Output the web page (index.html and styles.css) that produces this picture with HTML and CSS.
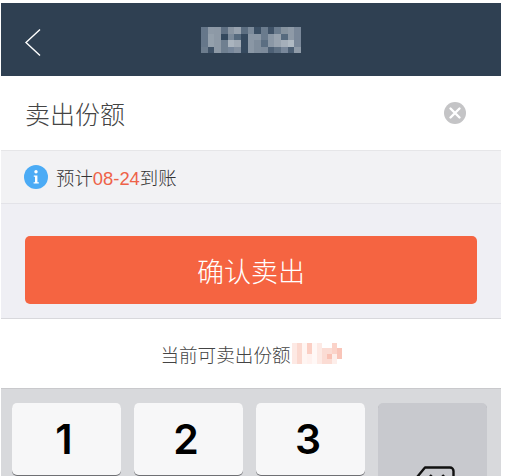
FILE: index.html
```html
<!DOCTYPE html>
<html lang="zh">
<head>
<meta charset="utf-8">
<title>确认卖出</title>
<link rel="stylesheet" href="styles.css">
</head>
<body>
<div class="app">
  <header class="nav">
    <svg class="back" width="18" height="30" viewBox="0 0 18 30"><path d="M16 1.5 2 14.5 16 27.5" fill="none" stroke="#fff" stroke-width="1.4"/></svg>
    <svg class="title-mosaic" width="100" height="26" viewBox="0 0 15 4" shape-rendering="crispEdges" preserveAspectRatio="none">
      <rect x="0" y="0" width="1" height="3" fill="#66778a"/><rect x="1" y="0" width="1" height="1" fill="#8e9aa7"/><rect x="2" y="0" width="1" height="4" fill="#8d99a6"/>
      <rect x="1" y="1" width="1" height="2" fill="#94a0ac"/><rect x="1" y="3" width="1" height="1" fill="#3f5267"/><rect x="0" y="3" width="1" height="1" fill="#6c7c8d"/>
      <rect x="3" y="0" width="1" height="1" fill="#5f7083"/><rect x="3" y="1" width="1" height="1" fill="#33485d"/><rect x="3" y="2" width="1" height="2" fill="#6f7f90"/>
      <rect x="4" y="0" width="1" height="1" fill="#8995a2"/><rect x="4" y="1" width="1" height="1" fill="#7b8a9a"/><rect x="4" y="2" width="1" height="1" fill="#aab4be"/><rect x="4" y="3" width="1" height="1" fill="#76869a"/>
      <rect x="5" y="0" width="1" height="1" fill="#98a3af"/><rect x="5" y="1" width="1" height="1" fill="#566a7e"/><rect x="5" y="2" width="1" height="1" fill="#a0aab5"/><rect x="5" y="3" width="1" height="1" fill="#8390a0"/>
      <rect x="6" y="0" width="1" height="1" fill="#5c6e81"/><rect x="6" y="1" width="1" height="3" fill="#35495e"/>
      <rect x="7" y="0" width="1" height="1" fill="#7b8a9a"/><rect x="7" y="1" width="1" height="3" fill="#8a97a5"/>
      <rect x="8" y="0" width="1" height="1" fill="#3b4f64"/><rect x="8" y="1" width="1" height="1" fill="#8a97a5"/><rect x="8" y="2" width="1" height="2" fill="#7f8d9c"/>
      <rect x="9" y="0" width="1" height="2" fill="#6a7b8d"/><rect x="9" y="2" width="1" height="1" fill="#5b6e82"/><rect x="9" y="3" width="1" height="1" fill="#7d8b9b"/>
      <rect x="10" y="0" width="1" height="1" fill="#3f5267"/><rect x="10" y="1" width="1" height="2" fill="#8a97a5"/><rect x="10" y="3" width="1" height="1" fill="#4d6075"/>
      <rect x="11" y="0" width="1" height="1" fill="#6b7c8e"/><rect x="11" y="1" width="1" height="2" fill="#98a3af"/><rect x="11" y="3" width="1" height="1" fill="#5f7184"/>
      <rect x="12" y="0" width="1" height="1" fill="#86939f"/><rect x="12" y="1" width="1" height="1" fill="#566a7e"/><rect x="12" y="2" width="1" height="1" fill="#a5afba"/><rect x="12" y="3" width="1" height="1" fill="#78879a"/>
      <rect x="13" y="0" width="1" height="2" fill="#8e9aa7"/><rect x="13" y="2" width="1" height="1" fill="#b0bac3"/><rect x="13" y="3" width="1" height="1" fill="#4c5f74"/>
      <rect x="14" y="0" width="1" height="3" fill="#7a8899"/><rect x="14" y="3" width="1" height="1" fill="#8f9ba8"/>
    </svg>
  </header>

  <section class="field">
    <span class="field-label">卖出份额</span>
    <svg class="clear" width="22" height="22" viewBox="0 0 22 22"><circle cx="11" cy="11" r="11" fill="#c4c4c6"/><path d="M6.5 6.5l9 9m0-9l-9 9" stroke="#fff" stroke-width="2.4" stroke-linecap="round"/></svg>
  </section>

  <section class="notice">
    <svg class="info" width="24" height="24" viewBox="0 0 24 24"><circle cx="12" cy="12" r="12" fill="#4babf5"/><circle cx="12" cy="6.8" r="1.7" fill="#fff"/><path d="M9.8 10.4h3.6v6.8h1.4v1.4H9.6v-1.4h1.4v-5.4H9.8z" fill="#fff"/></svg>
    <span class="notice-text">预计<span class="accent">08-24</span>到账</span>
  </section>

  <section class="action">
    <button class="confirm" type="button">确认卖出</button>
  </section>

  <section class="balance">
    <span>当前可卖出份额</span>
    <svg class="balance-mosaic" width="50" height="21" viewBox="0 0 10 4" shape-rendering="crispEdges" preserveAspectRatio="none">
      <rect x="0" y="0" width="2" height="4" fill="#fde9e4"/><rect x="1" y="0" width="1" height="4" fill="#fbd9d0"/>
      <rect x="2" y="0" width="1" height="4" fill="#fff5f2"/><rect x="3" y="0" width="1" height="2" fill="#fbcfc4"/><rect x="3" y="2" width="1" height="2" fill="#fff1ee"/>
      <rect x="4" y="0" width="1" height="4" fill="#fff8f6"/><rect x="5" y="0" width="1" height="4" fill="#fdeae5"/>
      <rect x="6" y="1" width="2" height="3" fill="#fbdcd4"/><rect x="7" y="2" width="1" height="1" fill="#f9c2b5"/><rect x="8" y="0" width="1" height="2" fill="#fbd3c9"/>
      <rect x="8" y="2" width="1" height="2" fill="#fdeeea"/><rect x="9" y="1" width="1" height="2" fill="#f9c5b9"/>
    </svg>
  </section>

  <section class="keyboard">
    <div class="key">1</div>
    <div class="key">2</div>
    <div class="key">3</div>
    <div class="key key-delete">
      <svg width="44" height="32" viewBox="0 0 44 32"><path d="M14 1.5h25a3.5 3.5 0 0 1 3.5 3.5v22a3.5 3.5 0 0 1-3.5 3.5H14L2 16z" fill="none" stroke="#111" stroke-width="2.4" stroke-linejoin="round"/><path d="M19 9l14 14m0-14L19 23" stroke="#111" stroke-width="2.4"/></svg>
    </div>
  </section>
</div>
</body>
</html>
```
FILE: styles.css
```css
html, body {
  margin: 0;
  padding: 0;
  height: 476px;
  overflow: hidden;
  background: #fff;
}
body {
  font-family: "Liberation Sans", "Noto Sans CJK SC", sans-serif;
  color: #444;
}
.app {
  width: 500px;
  margin: 3px 0 0 1px;
  display: flex;
  flex-direction: column;
}
.nav {
  height: 73px;
  background: #2f4052;
  display: flex;
  align-items: center;
  justify-content: center;
  position: relative;
}
.back {
  position: absolute;
  left: 23px;
  top: 25px;
}
.title-mosaic {
  display: block;
}
.field {
  height: 74px;
  background: #fff;
  border-bottom: 1px solid #e6e6e8;
  display: flex;
  align-items: center;
  justify-content: space-between;
  padding: 0 35px 0 24px;
}
.field-label {
  font-size: 25px;
  font-weight: 300;
  color: #444;
  margin-top: -1px;
}
.clear {
  display: block;
}
.notice {
  height: 52px;
  background: #f2f2f4;
  border-bottom: 1px solid #e3e3e8;
  display: flex;
  align-items: center;
  gap: 8px;
  padding-left: 23px;
}
.info {
  display: block;
}
.notice-text {
  font-size: 18.4px;
  font-weight: 300;
  color: #333;
}
.accent {
  color: #ee6248;
}
.action {
  background: #efeff4;
  padding: 32px 24px 14px;
  border-bottom: 1px solid #d8d8dc;
}
.confirm {
  display: block;
  width: 100%;
  height: 68px;
  border: 0;
  border-radius: 5px;
  padding: 0;
  background: #f56441;
  color: #fff;
  font: inherit;
  font-size: 27px;
  font-weight: 300;
}
.balance {
  height: 69px;
  background: #fff;
  border-bottom: 1px solid #c9c9cc;
  display: flex;
  align-items: center;
  justify-content: center;
  gap: 1px;
  font-size: 18.6px;
  font-weight: 300;
  color: #444;
}
.balance-mosaic {
  display: block;
}
.keyboard {
  background: #d8d9dc;
  padding: 14px 14px 0 11px;
  display: grid;
  grid-template-columns: repeat(4, 109px);
  grid-template-rows: 72px 72px;
  gap: 13px;
}
.key {
  background: #f7f7f8;
  border-radius: 5px;
  box-shadow: 0 1px 0 #6f7074;
  display: flex;
  align-items: center;
  justify-content: center;
  padding-right: 5px;
  font-family: "Inter", "Liberation Sans", sans-serif;
  font-weight: 600;
  font-size: 41px;
  color: #000;
}
.key-delete {
  grid-column: 4;
  grid-row: 1 / span 2;
  background: #c8c9ce;
  padding: 0;
}
```
